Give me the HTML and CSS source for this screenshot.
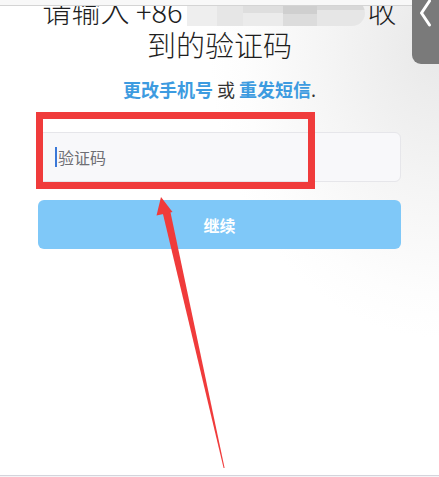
FILE: index.html
```html
<!DOCTYPE html>
<html lang="zh-CN">
<head>
<meta charset="utf-8">
<title>验证码</title>
<link rel="stylesheet" href="styles.css">
</head>
<body>
<div class="page">
  <div class="strip"></div>
  <main class="main">
    <h1 class="title">
      <span class="line1"><span class="t-pre">请输入 +86</span><span class="blur"><i class="b1"></i><i class="b2"></i><i class="b3"></i><i class="b4"></i><i class="b5"></i></span><span>收</span></span>
      <span class="line2">到的验证码</span>
    </h1>
    <p class="links"><a class="link">更改手机号</a> 或 <a class="link">重发短信</a>.</p>
    <div class="field"><span class="caret"></span><span class="placeholder">验证码</span></div>
    <button class="btn">继续</button>
  </main>
  <div class="bottom"></div>

  <div class="tab">
    <svg width="27" height="64" viewBox="0 0 27 64"><path d="M17.5 1 L9.5 13 L17.5 25" fill="none" stroke="#fff" stroke-width="3" stroke-linecap="round" stroke-linejoin="round"/></svg>
  </div>

  <svg class="annot" width="439" height="477" viewBox="0 0 439 477">
    <rect x="39.5" y="115.5" width="272" height="70" fill="none" stroke="#f03b3b" stroke-width="7"/>
    <polygon points="162,210 170,210 224.6,468 223.6,468" fill="#f03b3b"/>
    <polygon points="161,197 156.5,215.6 172.5,212" fill="#f03b3b"/>
  </svg>
</div>
</body>
</html>
```

FILE: styles.css
```css
html, body {
  margin: 0;
  padding: 0;
}
body {
  font-family: "Noto Sans CJK SC", "Noto Sans", "Liberation Sans", sans-serif;
  background: #fff;
}
.page {
  position: relative;
  width: 439px;
  height: 477px;
  overflow: hidden;
  display: flex;
  flex-direction: column;
  background: radial-gradient(ellipse 230px 290px at 100% 10%, #e8e8e8 0%, #f5f5f5 50%, #fdfdfd 85%, #fff 100%);
}
.strip {
  height: 5px;
  flex: none;
  background: #f8f8f8;
  border-bottom: 1px solid #d4d4d4;
}
.main {
  flex: 1;
  overflow: hidden;
  display: flex;
  flex-direction: column;
  align-items: center;
}
.title {
  margin: -13px 0 0;
  font-size: 29px;
  font-weight: 300;
  line-height: 34px;
  color: #1e1e1e;
  display: flex;
  flex-direction: column;
  align-items: center;
}
.line1 {
  display: flex;
  align-items: center;
  white-space: pre;
}
.t-pre {
  margin-right: 5px;
}
.blur {
  display: inline-flex;
  width: 178px;
  height: 26px;
  margin-top: 6px;
  margin-right: 2px;
  border-radius: 0 14px 14px 0;
  overflow: hidden;
}
.blur i {
  display: block;
  height: 100%;
}
.blur .b1 { width: 30px; background: #eeeeee; }
.blur .b2 { width: 26px; background: #e6e6e6; }
.blur .b3 { width: 40px; background: linear-gradient(#dedede 50%, #ebebeb 50%); }
.blur .b4 { width: 34px; background: linear-gradient(#cfcfcf 55%, #dcdcdc 55%); }
.blur .b5 { width: 48px; background: linear-gradient(#d8d8d8 40%, #e6e6e6 40%); }
.line2 {
  display: block;
}
.links {
  margin: 15px 0 0;
  font-size: 18px;
  line-height: 26px;
  color: #333;
}
.link {
  color: #3d9be0;
  font-weight: 700;
}
.field {
  box-sizing: border-box;
  width: 363px;
  height: 50px;
  margin-top: 30px;
  border: 1px solid #e6e6ea;
  border-radius: 6px;
  background: #f8f8fa;
  display: flex;
  align-items: center;
  padding-left: 16px;
}
.caret {
  width: 2px;
  height: 20px;
  background: #3b78d8;
  margin-right: 1px;
}
.placeholder {
  font-size: 16px;
  color: #6f6f74;
}
.btn {
  box-sizing: border-box;
  width: 363px;
  height: 49px;
  margin-top: 18px;
  border: none;
  border-radius: 6px;
  background: #7fc8f8;
  color: #fff;
  font-family: inherit;
  font-size: 16px;
  font-weight: 700;
  padding: 0;
}
.bottom {
  flex: none;
  height: 1px;
  border-top: 1px solid #d4d4dc;
  background: #f4f4f6;
}
.tab {
  position: absolute;
  top: 0;
  right: 0;
  width: 27px;
  height: 64px;
  background: #7a7a7a;
  border-bottom-left-radius: 9px;
}
.tab svg {
  display: block;
}
.annot {
  position: absolute;
  left: 0;
  top: 0;
  pointer-events: none;
}
```
